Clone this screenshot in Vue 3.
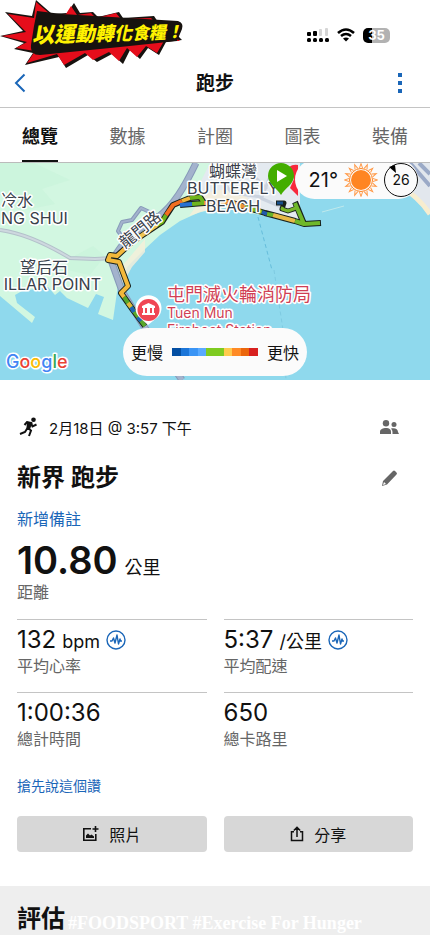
<template>
  <div class="app">
    <svg class="campaign" viewBox="0 0 185 70" role="img" aria-label="以運動轉化食糧！">
      <path class="burst-shadow" d="M36 0L52 14 67 13 74 3 80 13 93 12 98 17 119 12 123 18 154 16 158 22 179 23 174 32 182 40 166 42 159 55 148 48 140 59 130 50 123 64 112 54 97 62 88 55 66 68 59 57 25 65 33 53 14 49 24 43 0 36 23 31 5 12 32 16z" />
      <path class="burst" d="M36 2L50 14 66 14 71 6 77 15 91 13 96 18 116 13 121 19 151 18 156 23 177 25 171 34 180 41 164 41 157 53 146 46 137 57 127 48 119 61 109 52 93 60 85 53 64 65 57 54 27 63 35 51 16 48 27 42 2 36 26 32 8 14 34 18z" />
      <path class="burst-shadow" d="M37 11L62 14 178 21Q184 23 182 29L177 41 120 47 40 55Q30 55 31 45L34 26z" />
      <text class="campaign-text" x="32" y="43" transform="rotate(-2 32 43)">
        <tspan v-for="(g, i) in slogan" :key="i" :font-size="g.size">{{ g.char }}</tspan>
      </text>
    </svg>

    <div class="status-bar">
      <svg width="22" height="16" viewBox="0 0 22 16">
        <rect x="0" y="5" width="4" height="4" rx="1" />
        <rect x="6" y="4" width="4" height="5" rx="1" />
        <rect x="12" y="2" width="3" height="7" rx="1" fill="#d5d5d5" />
        <rect x="18" y="1" width="3" height="8" rx="1" fill="#d5d5d5" />
        <rect v-for="x in [0, 6, 12, 18]" :key="x" :x="x" y="11" width="4" height="4" rx="1.5" />
      </svg>
      <svg width="18" height="14" viewBox="0 0 18 14">
        <path d="M1 5Q9-2 17 5M4 8q5-4 10 0" fill="none" stroke="#000" stroke-width="2.6" />
        <path d="M6 10.500q3-2 6 0L9 13.500z" />
      </svg>
      <div class="battery"><span>35</span></div>
    </div>

    <header class="header">
      <button class="icon-btn back" aria-label="返回">
        <svg width="12" height="20" viewBox="0 0 12 20">
          <path d="M10.500 1.500L2 10l8.500 8.500" fill="none" stroke="#1a66b8" stroke-width="2" />
        </svg>
      </button>
      <h1>跑步</h1>
      <button class="icon-btn more" aria-label="更多">
        <svg width="4" height="20" viewBox="0 0 4 20" fill="#1a66b8">
          <rect width="4" height="4" />
          <rect y="8" width="4" height="4" />
          <rect y="16" width="4" height="4" />
        </svg>
      </button>
    </header>

    <nav class="tabs">
      <button
        v-for="tab in tabs"
        :key="tab"
        :class="{ active: tab === activeTab }"
        @click="activeTab = tab"
      >
        {{ tab }}
      </button>
    </nav>

    <section class="map">
      <svg class="map-canvas" viewBox="0 0 430 217" preserveAspectRatio="xMidYMid slice">
        <rect width="430" height="217" fill="#8fd9ed" />
        <path
          fill="#d2f7e1"
          d="M0 0H300V40L285 45 265 53 225 45 200 49 180 58 160 72 145 86 128 103 118 122 113 157 98 151 104 134 96 131 88 145 67 135 60 128 55 132 48 124 22 128 15 132 17 140 35 154 32 160 0 133z"
        />
        <path d="M0 0H34L70 17 42 26 55 41 20 48 0 32zM65 98L93 83 105 93 90 112 58 105z" fill="#c8f3da" opacity="0.6" />
        <path d="M210 0H300V56L266 51 230 44 202 48 190 40z" fill="#e4eaf0" />
        <path d="M206 30l28-6 30 25-34-6-26 5-15 5zM145 76l-22 26-5 18 4 2 10-18 13-15z" fill="#f6efd9" opacity="0.8" />
        <path d="M402 0H430V51L414 36 404 22z" fill="#e2e7ed" />
        <path d="M402 26q14 5 28 25" fill="none" stroke="#f7edcf" stroke-width="5" />
        <path d="M410 0l20 23M419 0l11 11" fill="none" stroke="#9baac7" stroke-width="4" />
        <path d="M0 67Q30 71 70 95L95 96 113 95" fill="none" stroke="#b3c1ca" stroke-width="4" />
        <path d="M0 67Q30 71 70 95L95 96 113 95" fill="none" stroke="#ced8df" stroke-width="2" />
        <g fill="none" stroke="#879ab9" stroke-linejoin="round">
          <path d="M196 0C184 25 173 43 158 54Q120 76 112 100L122 128 143 162 182 217" stroke-width="7" />
          <path d="M158 53L141 45 132 57 122 59 118 68 124 76" stroke-width="4" />
        </g>
        <g fill="none" stroke="#a3b3cd" stroke-linejoin="round">
          <path d="M196 0C184 25 173 43 158 54Q120 76 112 100L122 128 143 162 182 217" stroke-width="5" />
          <path d="M158 53L141 45 132 57 122 59 118 68 124 76" stroke-width="2" />
        </g>
        <path d="M212 5l20 25 30 4 12-31M230 30l20-27M258 34l28 12M247 6l20 20" fill="none" stroke="#cbd3df" stroke-width="3" />
        <path d="M258 54l14 53" fill="none" stroke="#65bddb" stroke-dasharray="4 3" />
        <path d="M274 107l9 60 3 50" fill="none" stroke="#7fcbe2" stroke-dasharray="4 3" />
        <path d="M322 49l22-6" stroke="#bfe9ec" />

        <g fill="none" stroke-linejoin="round">
          <path v-for="d in track" :key="d" :d="d" stroke="#18211d" stroke-width="6" />
          <path d="M276 40h8l-2 6 6 2 9-3" stroke="#18211d" stroke-width="5" />
          <path v-for="(part, i) in trackParts" :key="i" :d="part.d" :stroke="part.color" stroke-width="4" />
          <path d="M283 44l-1 2 6 2 8-3" stroke="#78b62a" stroke-width="3" />
          <path d="M277 40h6" stroke="#174f8d" stroke-width="3" />
        </g>

        <g class="place">
          <text x="1" y="43">冷水</text>
          <text x="1" y="61">NG SHUI</text>
          <text x="20" y="110">望后石</text>
          <text x="101" y="127" text-anchor="end">ILLAR POINT</text>
          <text x="209" y="14">蝴蝶灣</text>
          <text x="187" y="31">BUTTERFLY</text>
          <text x="206" y="49">BEACH</text>
          <text x="125" y="86" transform="rotate(-39 125 86)">龍門路</text>
        </g>
        <g class="poi">
          <text x="167" y="138" font-size="18">屯門滅火輪消防局</text>
          <text x="167" y="155" font-size="14">Tuen Mun</text>
          <text x="167" y="172" font-size="14">Fireboat Station</text>
        </g>

        <path d="M148 162L139 154A13 13 0 1 1 158 154z" fill="#fff" />
        <circle cx="148.500" cy="147" r="11" fill="#f04654" />
        <path d="M142 145v-2l6.500-3 6.500 3v2h-1v5h1v2h-13v-2h1v-5zM145 145v5h2v-5zM150 145v5h2v-5z" fill="#fff" fill-rule="evenodd" />

        <path d="M289 4q4-3 9-2v31l-8-8 4-9z" fill="#f8283b" />
        <path d="M281 32C277 25 268 21 268 13a13 13 0 0 1 26 0c0 8-9 12-13 19z" fill="#43ad00" />
        <path d="M277 7l10 6-10 6z" fill="#fff" />
        <text class="google" x="6" y="205" font-size="18">
          <tspan v-for="(g, i) in google" :key="i" :fill="g[1]">{{ g[0] }}</tspan>
        </text>
      </svg>

      <div class="weather">
        <span>21°</span>
        <svg width="34" height="34" viewBox="-17 -17 34 34">
          <circle r="10" fill="#ff8522" />
          <circle r="11.500" fill="none" stroke="#ff8522" />
          <path
            v-for="n in 16"
            :key="n"
            d="M-1.500-12L0-16.500 1.500-12"
            fill="none"
            stroke="#ff9947"
            :transform="`rotate(${n * 22.5})`"
          />
        </svg>
        <div class="wind">
          26
          <svg width="8" height="8" viewBox="0 0 8 8"><path d="M0 2l6-2 1 8z" /></svg>
        </div>
      </div>

      <div class="legend">
        <span>更慢</span>
        <div class="scale">
          <i v-for="(c, i) in paceColors" :key="i" :style="{ background: c }"></i>
        </div>
        <span>更快</span>
      </div>
    </section>

    <main class="details">
      <div class="row date-row">
        <svg width="20" height="20" viewBox="0 0 20 20">
          <circle cx="14.500" cy="2.800" r="2.300" fill="#111" />
          <path d="M5.500 8L8 5l4 1-3 5 3 2.500-2 5.500M12 6l1.500 3.500 4-2M8.500 11L6 15l-5 2" fill="none" stroke="#111" stroke-width="2" />
          <path d="M8 4.500l5.500 1.500-2.500 6-3.500-1z" fill="#111" />
        </svg>
        <span class="date">2月18日 @ 3:57 下午</span>
        <button class="icon-btn" aria-label="隱私">
          <svg width="19" height="14" viewBox="0 0 19 14" fill="#666">
            <circle cx="6" cy="3.200" r="3.200" />
            <circle cx="14" cy="4.500" r="2.500" />
            <path d="M0 14v-2c0-3 3-4 6-4s5 1 5 4v2zM12.500 14v-2q0-2-1.500-3.500c4-1 7 .5 7 3.500l1 2z" />
          </svg>
        </button>
      </div>
      <div class="row title-row">
        <h2>新界 跑步</h2>
        <button class="icon-btn" aria-label="編輯">
          <svg width="17" height="17" viewBox="0 0 17 17">
            <path d="M1 16l1-5L12 1q1-1 2 0l1.500 1.500q1 1 0 2L6 14.500zM2 15l3-1-2-2z" fill="#666" fill-rule="evenodd" />
          </svg>
        </button>
      </div>
      <a href="#" class="note">新增備註</a>

      <div class="distance"><strong>10.80</strong><span class="unit">公里</span></div>
      <div class="label">距離</div>

      <div class="stats">
        <div v-for="s in stats" :key="s.label" class="stat">
          <div class="value">
            {{ s.value }}
            <span v-if="s.unit" class="unit">{{ s.unit }}</span>
            <svg v-if="s.unit" width="20" height="20" viewBox="0 0 20 20" fill="none" stroke="#1a66b8">
              <circle cx="10" cy="10" r="9" stroke-width="1.400" />
              <path d="M4 11h2l1.500-3 1.500 5 2-8 1.500 9 1.500-5 .5 2H16" stroke-width="1.400" stroke-linejoin="round" />
            </svg>
          </div>
          <div class="label">{{ s.label }}</div>
        </div>
      </div>

      <a href="#" class="like">搶先說這個讚</a>

      <div class="actions">
        <button>
          <svg width="17" height="16" viewBox="0 0 17 16">
            <path d="M9 2.800H1.800v11.400h12V8M13.500 0v6M10.500 3h6" fill="none" stroke="#111" stroke-width="1.600" />
            <path d="M4 12V9.500l2-2 2 2 1.500-1 2.500 2V12z" fill="#111" />
          </svg>
          照片
        </button>
        <button>
          <svg width="14" height="16" viewBox="0 0 14 16">
            <path d="M4 5.800H1.500v8.700h11V5.800H10M7 11V2M3.800 4.500L7 1.300l3.200 3.200" fill="none" stroke="#111" stroke-width="1.500" />
          </svg>
          分享
        </button>
      </div>
    </main>

    <section class="review">
      <h2>評估</h2>
      <div class="hashtags">#FOODSPORT #Exercise For Hunger</div>
    </section>
  </div>
</template>

<script setup>
import { ref } from 'vue'

const tabs = ['總覽', '數據', '計圈', '圖表', '裝備']
const activeTab = ref('總覽')

const sizes = [22, 21, 20, 19, 18, 17, 17, 17]
const slogan = [...'以運動轉化食糧！'].map((char, i) => ({ char, size: sizes[i] }))

const google = [
  ['G', '#4285f4'],
  ['o', '#ea4335'],
  ['o', '#fbbc05'],
  ['g', '#4285f4'],
  ['l', '#34a853'],
  ['e', '#ea4335'],
]

const paceColors = [
  '#034ea2', '#1b75d8', '#3a94f5', '#58a9ff', '#7ecb20',
  '#7ecb20', '#ffcb4d', '#ff8a25', '#eb660c', '#d8201f',
]

const track = [
  'M145 163L133 147 121 130 128 123 119 99 108 97 110 92 117 93 132 79 162 59 173 42 190 35 200 34 204 40 180 42',
  'M204 40L230 39 245 44 265 50 295 58 304 61 321 60M304 61L295 39',
]

const trackParts = [
  { d: 'M145 163L133 147 124 134', color: '#58a72c' },
  { d: 'M131 144l3 5M138 154l3 4', color: '#1b65b4' },
  { d: 'M128 140l3 4', color: '#e2b63c' },
  { d: 'M124 134L121 130 128 123 119 99 108 97 110 92 117 93 132 79', color: '#f3b83b' },
  { d: 'M132 79L157 62', color: '#edc354' },
  { d: 'M157 62L162 59 166 52', color: '#6ab41d' },
  { d: 'M166 52L173 42 182 38', color: '#f36e21' },
  { d: 'M182 38L190 35', color: '#efb43c' },
  { d: 'M190 35L200 34 204 40 192 41', color: '#6fb51e' },
  { d: 'M192 41L180 42', color: '#2871d2' },
  { d: 'M204 40L230 39 245 44', color: '#e8923a' },
  { d: 'M245 44L262 49', color: '#7bb823' },
  { d: 'M262 49l5 2', color: '#205aac' },
  { d: 'M267 51L273 52', color: '#67b529' },
  { d: 'M273 52L295 58', color: '#e6b947' },
  { d: 'M295 58L304 61 320 60M304 61L295 40', color: '#6fb82a' },
]

const stats = [
  { value: '132', unit: 'bpm', label: '平均心率' },
  { value: '5:37', unit: '/公里', label: '平均配速' },
  { value: '1:00:36', label: '總計時間' },
  { value: '650', label: '總卡路里' },
]
</script>

<style>
body {
  margin: 0;
  background: #fff;
}
</style>

<style scoped>
.app {
  position: relative;
  color: #111;
  font-family: Inter, "Noto Sans CJK TC", sans-serif;
}

h1, h2 { margin: 0; font-weight: 600; }
button { font-family: inherit; color: inherit; border: 0; cursor: pointer; }
a { display: block; color: #1a66b8; text-decoration: none; }
svg { flex-shrink: 0; }

.campaign {
  position: absolute;
  top: 0;
  left: 0;
  width: 185px;
  height: 70px;
}
.burst-shadow { fill: #17120f; }
.burst { fill: #e60d1b; }
.campaign-text {
  fill: #fff200;
  font-weight: 900;
  font-style: italic;
}

.status-bar {
  display: flex;
  justify-content: flex-end;
  align-items: center;
  gap: 8px;
  height: 20px;
  padding: 25px 40px 13px 0;
}
.battery {
  display: flex;
  align-items: center;
  justify-content: center;
  width: 27px;
  height: 15px;
  border-radius: 5px;
  background: linear-gradient(to right, #000 35%, #b2b2b2 35%);
  color: #fff;
  font-size: 13px;
  font-weight: 700;
}

.header {
  display: flex;
  align-items: center;
  justify-content: space-between;
  height: 49px;
  padding: 0 14px;
  border-bottom: 1px solid #c4c4c4;
}
.header h1 { padding-top: 2px; font-size: 19px; line-height: 28px; }
.header .icon-btn { width: 32px; height: 32px; }
.header .back { justify-content: flex-start; }

.icon-btn {
  display: flex;
  align-items: center;
  justify-content: center;
  padding: 0;
  background: none;
}

.tabs {
  display: flex;
  justify-content: space-between;
  height: 54px;
  padding: 0 22px;
  border-bottom: 1px solid #bbb;
}
.tabs button {
  padding: 2px 0 0;
  border-bottom: 2px solid transparent;
  background: none;
  color: #666;
  font-size: 18px;
}
.tabs .active {
  border-color: #111;
  color: #111;
  font-weight: 600;
}

.map {
  position: relative;
  overflow: hidden;
}
.map-canvas {
  display: block;
  width: 100%;
  height: 217px;
}
.place text, .poi text, .google {
  stroke: #fff;
  stroke-width: 3px;
  stroke-linejoin: round;
  paint-order: stroke;
}
.place { fill: #38404a; font-size: 16px; }
.poi { fill: #d03f55; }
.google { font-weight: 500; }

.weather {
  position: absolute;
  top: -3px;
  right: 12px;
  display: flex;
  align-items: center;
  gap: 6px;
  height: 39px;
  padding-left: 14px;
  border-radius: 20px;
  background: #fbfbfb;
  font-size: 20px;
}
.wind {
  position: relative;
  display: flex;
  align-items: center;
  justify-content: center;
  width: 32px;
  height: 32px;
  border: 1px solid #111;
  border-radius: 50%;
  font-size: 14px;
}
.wind svg {
  position: absolute;
  top: 1px;
  left: 4px;
}

.legend {
  position: absolute;
  bottom: 4px;
  left: 50%;
  display: flex;
  align-items: center;
  gap: 9px;
  height: 48px;
  padding: 0 8px;
  border-radius: 24px;
  background: #fbfbfb;
  font-size: 16px;
  white-space: nowrap;
  transform: translateX(-50%);
}
.scale { display: flex; width: 86px; height: 8px; }
.scale i { flex: 1; }

.details { padding: 34px 17px; }
.row {
  display: flex;
  align-items: center;
  justify-content: space-between;
}
.row .icon-btn { width: 20px; height: 20px; margin-right: 14px; }
.date-row { height: 26px; padding-left: 2px; }
.date { flex: 1; margin-left: 10px; font-size: 15px; }
.title-row { height: 34px; margin-top: 21px; }
h2 { font-size: 24px; line-height: 34px; }
.note { margin-top: 12px; font-size: 16px; line-height: 24px; }

.distance {
  display: flex;
  align-items: baseline;
  gap: 7px;
  height: 40px;
  margin-top: 9px;
  line-height: 40px;
}
.distance strong { font-size: 38px; font-weight: 600; }
.unit { font-size: 18px; }
.label { color: #666; font-size: 16px; line-height: 24px; }

.stats {
  display: grid;
  grid-template-columns: 1fr 1fr;
  column-gap: 17px;
  margin-top: 15px;
}
.stat {
  padding: 6px 0 14px;
  border-top: 1px solid #c4c4c4;
}
.value {
  display: flex;
  align-items: baseline;
  gap: 6px;
  height: 28px;
  font-size: 24px;
  line-height: 28px;
}
.value svg { align-self: center; }

.like { margin-top: 11px; font-size: 14px; line-height: 20px; }

.actions {
  display: grid;
  grid-template-columns: 1fr 1fr;
  gap: 17px;
  margin-top: 20px;
}
.actions button {
  display: flex;
  align-items: center;
  justify-content: center;
  gap: 10px;
  height: 36px;
  border-radius: 4px;
  background: #d7d7d7;
  font-size: 16px;
}

.review {
  position: relative;
  padding: 17px 17px 0;
  background: #eee;
}
.review h2 { line-height: 32px; }
.hashtags {
  position: absolute;
  bottom: 0;
  left: 68px;
  color: #fff;
  font: bold 18px/24px "Liberation Serif", serif;
  white-space: nowrap;
}
</style>
